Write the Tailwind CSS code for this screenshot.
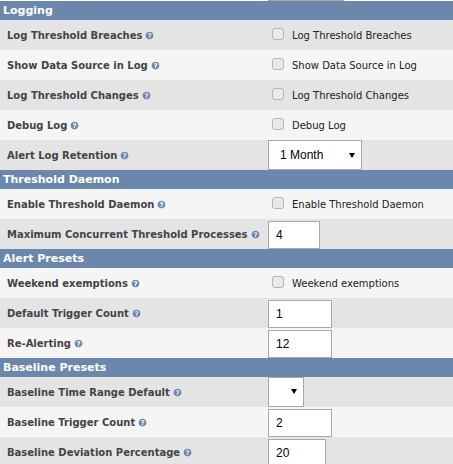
<!DOCTYPE html>
<html lang="en">
  <head>
    <meta charset="UTF-8" />
    <meta name="viewport" content="width=device-width, initial-scale=1.0" />
    <script src="https://cdn.jsdelivr.net/npm/@tailwindcss/browser@4"></script>
    <title>Settings</title>
  </head>
  <body class="bg-white overflow-hidden h-[464px] font-['DejaVu_Sans',sans-serif]">
    <svg class="hidden">
      <symbol id="help" viewBox="0 0 1792 1792">
        <path fill="currentColor" d="M1024 1376v-192q0-14-9-23t-23-9h-192q-14 0-23 9t-9 23v192q0 14 9 23t23 9h192q14 0 23-9t9-23zm256-672q0-88-55.500-163t-138.500-116-170-41q-243 0-371 213-15 24 8 42l132 100q7 6 19 6 16 0 25-12 53-68 86-92 34-24 86-24 48 0 85.500 26t37.500 59q0 38-20 61t-68 45q-63 28-115.500 86.500t-52.500 125.500v36q0 14 9 23t23 9h192q14 0 23-9t9-23q0-19 21.500-49.500t54.500-49.500q32-18 49-28.500t46-35 44.500-48 28-60.500 12.500-81zm384 192q0 209-103 385.500t-279.500 279.500-385.500 103-385.500-103-279.500-279.500-103-385.500 103-385.500 279.500-279.500 385.500-103 385.500 103 279.500 279.500 103 385.500z" />
      </symbol>
    </svg>

    <div class="h-px w-[76px] ml-[268px] bg-[#a8a4a0]"></div>

    <!-- Logging -->
    <div class="h-[19px] bg-[#6c87ac] pl-[3px] text-[11px] leading-[19px] font-bold text-white">Logging</div>

    <div class="h-[30px] bg-[#e4e4e4] flex items-center">
      <div class="w-[268px] pl-[7px] flex items-center gap-[3px] text-[10px] font-bold text-[#444] whitespace-nowrap">
        <span class="pt-px">Log Threshold Breaches</span>
        <svg class="w-[9px] h-[9px] text-[#6c87ac]"><use href="#help" /></svg>
      </div>
      <label class="flex items-center gap-[8px] pl-[4px] text-[10px] text-[#222]">
        <span class="w-[12px] h-[12px] mb-[2px] rounded-[3px] border border-[#b5b5b5] bg-[#e9e9e9]"></span>
        <span class="pt-px">Log Threshold Breaches</span>
      </label>
    </div>

    <div class="h-[30px] bg-[#f5f5f5] flex items-center">
      <div class="w-[268px] pl-[7px] flex items-center gap-[3px] text-[10px] font-bold text-[#444] whitespace-nowrap">
        <span class="pt-px">Show Data Source in Log</span>
        <svg class="w-[9px] h-[9px] text-[#6c87ac]"><use href="#help" /></svg>
      </div>
      <label class="flex items-center gap-[8px] pl-[4px] text-[10px] text-[#222]">
        <span class="w-[12px] h-[12px] mb-[2px] rounded-[3px] border border-[#b5b5b5] bg-[#e9e9e9]"></span>
        <span class="pt-px">Show Data Source in Log</span>
      </label>
    </div>

    <div class="h-[30px] bg-[#e4e4e4] flex items-center">
      <div class="w-[268px] pl-[7px] flex items-center gap-[3px] text-[10px] font-bold text-[#444] whitespace-nowrap">
        <span class="pt-px">Log Threshold Changes</span>
        <svg class="w-[9px] h-[9px] text-[#6c87ac]"><use href="#help" /></svg>
      </div>
      <label class="flex items-center gap-[8px] pl-[4px] text-[10px] text-[#222]">
        <span class="w-[12px] h-[12px] mb-[2px] rounded-[3px] border border-[#b5b5b5] bg-[#e9e9e9]"></span>
        <span class="pt-px">Log Threshold Changes</span>
      </label>
    </div>

    <div class="h-[30px] bg-[#f5f5f5] flex items-center">
      <div class="w-[268px] pl-[7px] flex items-center gap-[3px] text-[10px] font-bold text-[#444] whitespace-nowrap">
        <span class="pt-px">Debug Log</span>
        <svg class="w-[9px] h-[9px] text-[#6c87ac]"><use href="#help" /></svg>
      </div>
      <label class="flex items-center gap-[8px] pl-[4px] text-[10px] text-[#222]">
        <span class="w-[12px] h-[12px] mb-[2px] rounded-[3px] border border-[#b5b5b5] bg-[#e9e9e9]"></span>
        <span class="pt-px">Debug Log</span>
      </label>
    </div>

    <div class="h-[30px] bg-[#e4e4e4] flex items-center">
      <div class="w-[268px] pl-[7px] flex items-center gap-[3px] text-[10px] font-bold text-[#444] whitespace-nowrap">
        <span class="pt-px">Alert Log Retention</span>
        <svg class="w-[9px] h-[9px] text-[#6c87ac]"><use href="#help" /></svg>
      </div>
      <div class="relative w-[94px] h-[30px]">
        <select class="appearance-none w-full h-full pl-[11px] bg-white border border-[#aaa] text-[12px] font-['Liberation_Sans',sans-serif] text-black">
          <option>1 Month</option>
        </select>
        <svg class="absolute right-[7px] top-[13px] w-[6px] h-[5px]" viewBox="0 0 6 5"><path d="M0 0h6L3 5z" /></svg>
      </div>
    </div>

    <!-- Threshold Daemon -->
    <div class="h-[19px] bg-[#6c87ac] pl-[3px] text-[11px] leading-[19px] font-bold text-white">Threshold Daemon</div>

    <div class="h-[30px] bg-[#f5f5f5] flex items-center">
      <div class="w-[268px] pl-[7px] flex items-center gap-[3px] text-[10px] font-bold text-[#444] whitespace-nowrap">
        <span class="pt-px">Enable Threshold Daemon</span>
        <svg class="w-[9px] h-[9px] text-[#6c87ac]"><use href="#help" /></svg>
      </div>
      <label class="flex items-center gap-[8px] pl-[4px] text-[10px] text-[#222]">
        <span class="w-[12px] h-[12px] mb-[2px] rounded-[3px] border border-[#b5b5b5] bg-[#e9e9e9]"></span>
        <span class="pt-px">Enable Threshold Daemon</span>
      </label>
    </div>

    <div class="h-[30px] bg-[#e4e4e4] flex items-end">
      <div class="w-[268px] h-[30px] pl-[7px] flex items-center gap-[3px] text-[10px] font-bold text-[#444] whitespace-nowrap">
        <span class="pt-px">Maximum Concurrent Threshold Processes</span>
        <svg class="w-[9px] h-[9px] text-[#6c87ac]"><use href="#help" /></svg>
      </div>
      <input value="4" class="w-[52px] h-[28px] pl-[7px] bg-white border border-[#aaa] text-[12px] font-['Liberation_Sans',sans-serif] text-black" />
    </div>

    <!-- Alert Presets -->
    <div class="h-[19px] bg-[#6c87ac] pl-[3px] text-[11px] leading-[19px] font-bold text-white">Alert Presets</div>

    <div class="h-[30px] bg-[#f5f5f5] flex items-center">
      <div class="w-[268px] pl-[7px] flex items-center gap-[3px] text-[10px] font-bold text-[#444] whitespace-nowrap">
        <span class="pt-px">Weekend exemptions</span>
        <svg class="w-[9px] h-[9px] text-[#6c87ac]"><use href="#help" /></svg>
      </div>
      <label class="flex items-center gap-[8px] pl-[4px] text-[10px] text-[#222]">
        <span class="w-[12px] h-[12px] mb-[2px] rounded-[3px] border border-[#b5b5b5] bg-[#e9e9e9]"></span>
        <span class="pt-px">Weekend exemptions</span>
      </label>
    </div>

    <div class="h-[30px] bg-[#e4e4e4] flex items-end">
      <div class="w-[268px] h-[30px] pl-[7px] flex items-center gap-[3px] text-[10px] font-bold text-[#444] whitespace-nowrap">
        <span class="pt-px">Default Trigger Count</span>
        <svg class="w-[9px] h-[9px] text-[#6c87ac]"><use href="#help" /></svg>
      </div>
      <input value="1" class="w-[64px] h-[28px] pl-[7px] bg-white border border-[#aaa] text-[12px] font-['Liberation_Sans',sans-serif] text-black" />
    </div>

    <div class="h-[30px] bg-[#f5f5f5] flex items-end">
      <div class="w-[268px] h-[30px] pl-[7px] flex items-center gap-[3px] text-[10px] font-bold text-[#444] whitespace-nowrap">
        <span class="pt-px">Re-Alerting</span>
        <svg class="w-[9px] h-[9px] text-[#6c87ac]"><use href="#help" /></svg>
      </div>
      <input value="12" class="w-[64px] h-[28px] pl-[7px] bg-white border border-[#aaa] text-[12px] font-['Liberation_Sans',sans-serif] text-black" />
    </div>

    <!-- Baseline Presets -->
    <div class="h-[19px] bg-[#6c87ac] pl-[3px] text-[11px] leading-[19px] font-bold text-white">Baseline Presets</div>

    <div class="h-[30px] bg-[#e4e4e4] flex items-center">
      <div class="w-[268px] pl-[7px] flex items-center gap-[3px] text-[10px] font-bold text-[#444] whitespace-nowrap">
        <span class="pt-px">Baseline Time Range Default</span>
        <svg class="w-[9px] h-[9px] text-[#6c87ac]"><use href="#help" /></svg>
      </div>
      <div class="relative w-[36px] h-[30px]">
        <select class="appearance-none w-full h-full bg-white border border-[#aaa] text-[12px] font-['Liberation_Sans',sans-serif] text-black">
          <option></option>
        </select>
        <svg class="absolute right-[7px] top-[12px] w-[6px] h-[5px]" viewBox="0 0 6 5"><path d="M0 0h6L3 5z" /></svg>
      </div>
    </div>

    <div class="h-[30px] bg-[#f5f5f5] flex items-end">
      <div class="w-[268px] h-[30px] pl-[7px] flex items-center gap-[3px] text-[10px] font-bold text-[#444] whitespace-nowrap">
        <span class="pt-px">Baseline Trigger Count</span>
        <svg class="w-[9px] h-[9px] text-[#6c87ac]"><use href="#help" /></svg>
      </div>
      <input value="2" class="w-[64px] h-[28px] pl-[7px] bg-white border border-[#aaa] text-[12px] font-['Liberation_Sans',sans-serif] text-black" />
    </div>

    <div class="h-[30px] bg-[#e4e4e4] flex items-start">
      <div class="w-[268px] h-[30px] pl-[7px] flex items-center gap-[3px] text-[10px] font-bold text-[#444] whitespace-nowrap">
        <span class="pt-px">Baseline Deviation Percentage</span>
        <svg class="w-[9px] h-[9px] text-[#6c87ac]"><use href="#help" /></svg>
      </div>
      <input value="20" class="w-[58px] h-[28px] mt-[2px] pl-[7px] bg-white border border-[#aaa] text-[12px] font-['Liberation_Sans',sans-serif] text-black" />
    </div>
  </body>
</html>
